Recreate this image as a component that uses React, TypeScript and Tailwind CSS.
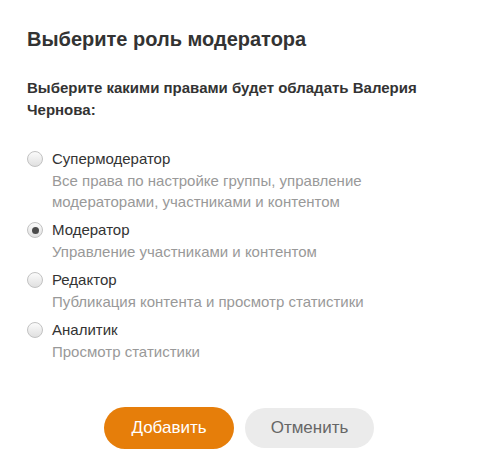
import React, { useState } from 'react';

const roles = [
    {
        id: 'super',
        title: 'Супермодератор',
        desc: 'Все права по настройке группы, управление модераторами, участниками и контентом',
    },
    { id: 'moderator', title: 'Модератор', desc: 'Управление участниками и контентом' },
    { id: 'editor', title: 'Редактор', desc: 'Публикация контента и просмотр статистики' },
    { id: 'analyst', title: 'Аналитик', desc: 'Просмотр статистики' },
];

const Radio = ({ checked }: { checked: boolean }) => (
    <span className="mt-[3px] flex h-[16px] w-[16px] shrink-0 items-center justify-center rounded-full border border-[#c2c2c2] bg-gradient-to-b from-[#fbfbfb] to-[#e0e0e0]">
        {checked && <span className="h-[7px] w-[7px] rounded-full bg-[#4a4a4a]" />}
    </span>
);

const App = () => {
    const [role, setRole] = useState('moderator');

    return (
        <div className="min-h-screen bg-white font-['Liberation_Sans',Arial,sans-serif] text-[#333]">
            <div className="w-[494px] px-[27px] pt-[27px]">
                <h1 className="text-[20px] font-bold leading-[24px]">Выберите роль модератора</h1>

                <p className="mt-[26px] w-[420px] text-[15px] font-bold leading-[22px]">
                    Выберите какими правами будет обладать Валерия Чернова:
                </p>

                <div className="mt-[27px] flex flex-col gap-[7px]">
                    {roles.map((r) => (
                        <label
                            key={r.id}
                            className="flex cursor-pointer items-start gap-[9px]"
                            onClick={() => setRole(r.id)}
                        >
                            <Radio checked={role === r.id} />
                            <div className="text-[15px] leading-[21px]">
                                <div className="text-[#333]">{r.title}</div>
                                <div className="mt-px w-[320px] text-[#999]">{r.desc}</div>
                            </div>
                        </label>
                    ))}
                </div>

                <div className="mt-[45px] flex items-center gap-[11px] pl-[77px]">
                    <button className="h-[42px] w-[130px] rounded-full bg-[#e67e0a] text-[17px] text-white">
                        Добавить
                    </button>
                    <button className="h-[40px] w-[129px] rounded-full bg-[#ebebeb] text-[17px] text-[#666]">
                        Отменить
                    </button>
                </div>
            </div>
        </div>
    );
};

export default App;
